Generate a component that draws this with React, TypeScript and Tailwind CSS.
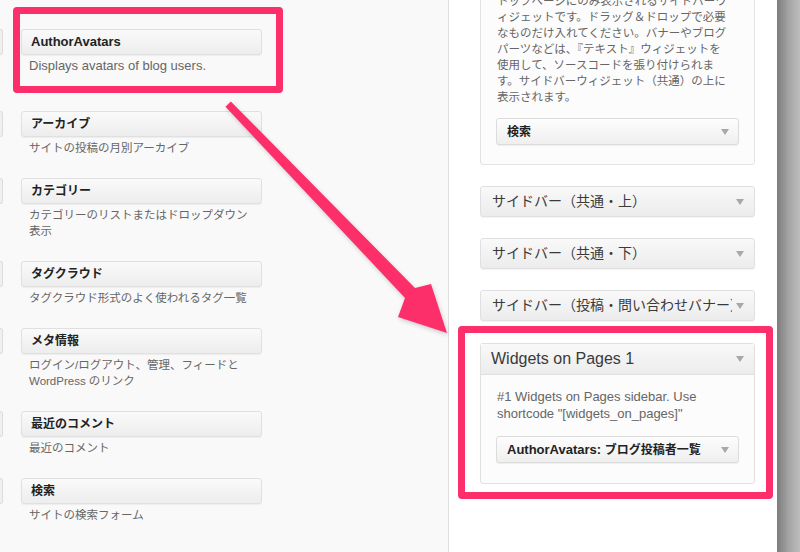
import React from 'react'

const font = { fontFamily: '"Liberation Sans", "Noto Sans CJK JP", sans-serif' }

type Widget = { title: string; desc: string[]; latin?: boolean }

const widgets: Widget[] = [
  { title: 'AuthorAvatars', desc: ['Displays avatars of blog users.'], latin: true },
  { title: 'アーカイブ', desc: ['サイトの投稿の月別アーカイブ'] },
  { title: 'カテゴリー', desc: ['カテゴリーのリストまたはドロップダウン', '表示'] },
  { title: 'タグクラウド', desc: ['タグクラウド形式のよく使われるタグ一覧'] },
  { title: 'メタ情報', desc: ['ログイン/ログアウト、管理、フィードと', 'WordPress のリンク'] },
  { title: '最近のコメント', desc: ['最近のコメント'] },
  { title: '検索', desc: ['サイトの検索フォーム'] },
]

const topText = [
  'トップページにのみ表示されるサイドバーウ',
  'ィジェットです。ドラッグ＆ドロップで必要',
  'なものだけ入れてください。バナーやブログ',
  'パーツなどは、『テキスト』ウィジェットを',
  '使用して、ソースコードを張り付けられま',
  'す。サイドバーウィジェット（共通）の上に',
  '表示されます。',
]

function Caret({ className = '' }: { className?: string }) {
  return (
    <svg width="8" height="6" viewBox="0 0 8 6" className={className}>
      <path d="M0 0 L8 0 L4 6 Z" fill="#a8a8a8" />
    </svg>
  )
}

function Select({ children }: { children: React.ReactNode }) {
  return (
    <div className="h-[27px] flex items-center justify-between pl-[10px] pr-[9px] rounded-[3px] border border-[#dcdcdc] bg-gradient-to-b from-[#fdfdfd] to-[#efefef] shadow-[0_1px_1px_rgba(0,0,0,0.06)]">
      <span className="text-[13px] font-bold text-[#222] whitespace-nowrap">{children}</span>
      <Caret />
    </div>
  )
}

function SidebarHeader({ label }: { label: string }) {
  return (
    <div className="h-[31px] flex items-center justify-between pl-[11px] pr-[10px] rounded-[3px] border border-[#e0e0e0] bg-gradient-to-b from-[#f9f9f9] to-[#ececec] shadow-[0_1px_1px_rgba(0,0,0,0.05)]">
      <span className="text-[14px] text-[#3a3a3a] whitespace-nowrap overflow-hidden">{label}</span>
      <Caret className="shrink-0 ml-1" />
    </div>
  )
}

export default function App() {
  return (
    <div className="relative w-[800px] h-[552px] overflow-hidden flex" style={font}>
      {/* available widgets */}
      <div className="w-[449px] shrink-0 bg-[#f9f9f9] border-r border-[#dedede] pt-[29px] flex flex-col">
        {widgets.map((w, i) => (
          <div key={w.title} className={i === 0 ? 'flex mb-[37px]' : 'flex mb-[22px]'}>
            <div className="w-[3px] h-[26px] border border-l-0 border-[#dcdcdc] bg-[#f0f0f0] rounded-r-[3px]" />
            <div className="ml-[18px] w-[241px]">
              <div className="h-[26px] flex items-center pl-[9px] rounded-[3px] border border-[#e0e0e0] bg-gradient-to-b from-[#fafafa] to-[#ededed] shadow-[0_1px_1px_rgba(0,0,0,0.05)]">
                <span className={w.latin ? 'text-[13px] font-bold text-[#222]' : 'text-[12px] font-bold text-[#222]'}>
                  {w.title}
                </span>
              </div>
              <div className={w.latin ? 'mt-[3px] pl-[8px] text-[13px] leading-[16px] text-[#666]' : 'mt-[3px] pl-[8px] text-[11.5px] leading-[16px] text-[#666]'}>
                {w.desc.map(d => (
                  <div key={d} className="whitespace-nowrap">{d}</div>
                ))}
              </div>
            </div>
          </div>
        ))}
      </div>

      {/* sidebars */}
      <div className="w-[328px] shrink-0 bg-white pl-[31px] pr-[22px] flex flex-col">
        <div className="-mt-[20px] border border-[#e3e3e3] bg-[#fcfcfc] rounded-b-[3px] pt-[12px] pb-[19px] px-[15px]">
          <div className="text-[11.5px] leading-[16px] text-[#666] pl-[1px]">
            {topText.map(t => (
              <div key={t} className="whitespace-nowrap">{t}</div>
            ))}
          </div>
          <div className="mt-[13px]">
            <Select><span className="text-[12px]">検索</span></Select>
          </div>
        </div>

        <div className="mt-[21px]"><SidebarHeader label="サイドバー（共通・上）" /></div>
        <div className="mt-[21px]"><SidebarHeader label="サイドバー（共通・下）" /></div>
        <div className="mt-[21px]"><SidebarHeader label="サイドバー（投稿・問い合わせバナー）" /></div>

        <div className="mt-[22px] border border-[#e0e0e0] rounded-[3px] bg-[#fcfcfc]">
          <div className="h-[31px] flex items-center justify-between pl-[10px] pr-[10px] border-b border-[#e0e0e0] bg-gradient-to-b from-[#f9f9f9] to-[#ececec]">
            <span className="text-[16px] text-[#3a3a3a]">Widgets on Pages 1</span>
            <Caret />
          </div>
          <div className="px-[15px] pt-[13px] pb-[20px]">
            <div className="text-[13px] leading-[17px] text-[#666] pl-[1px]">
              #1 Widgets on Pages sidebar. Use
              <br />
              shortcode "[widgets_on_pages]"
            </div>
            <div className="mt-[14px]">
              <Select>
                AuthorAvatars: <span className="text-[12px]">ブログ投稿者一覧</span>
              </Select>
            </div>
          </div>
        </div>
      </div>

      {/* window shadow */}
      <div className="flex-1 bg-gradient-to-r from-[#7c7c7c] via-[#a4a4a4] to-[#bdbdbd]" />

      {/* annotations */}
      <div className="absolute left-[13px] top-[7px] w-[270px] h-[86px] border-[7px] border-[#fc2f6b] rounded-[4px]" />
      <div className="absolute left-[458px] top-[326px] w-[315px] h-[173px] border-[7px] border-[#fc2f6b] rounded-[4px]" />
      <svg className="absolute left-0 top-0 pointer-events-none" width="800" height="552" viewBox="0 0 800 552">
        <polygon
          points="225.5,106.8 230.8,101.4 415,288 431,284 447,333 398,317 405,298"
          fill="#fc2f6b"
          style={{ filter: 'drop-shadow(1px 2px 2px rgba(0,0,0,0.18))' }}
        />
      </svg>
    </div>
  )
}
